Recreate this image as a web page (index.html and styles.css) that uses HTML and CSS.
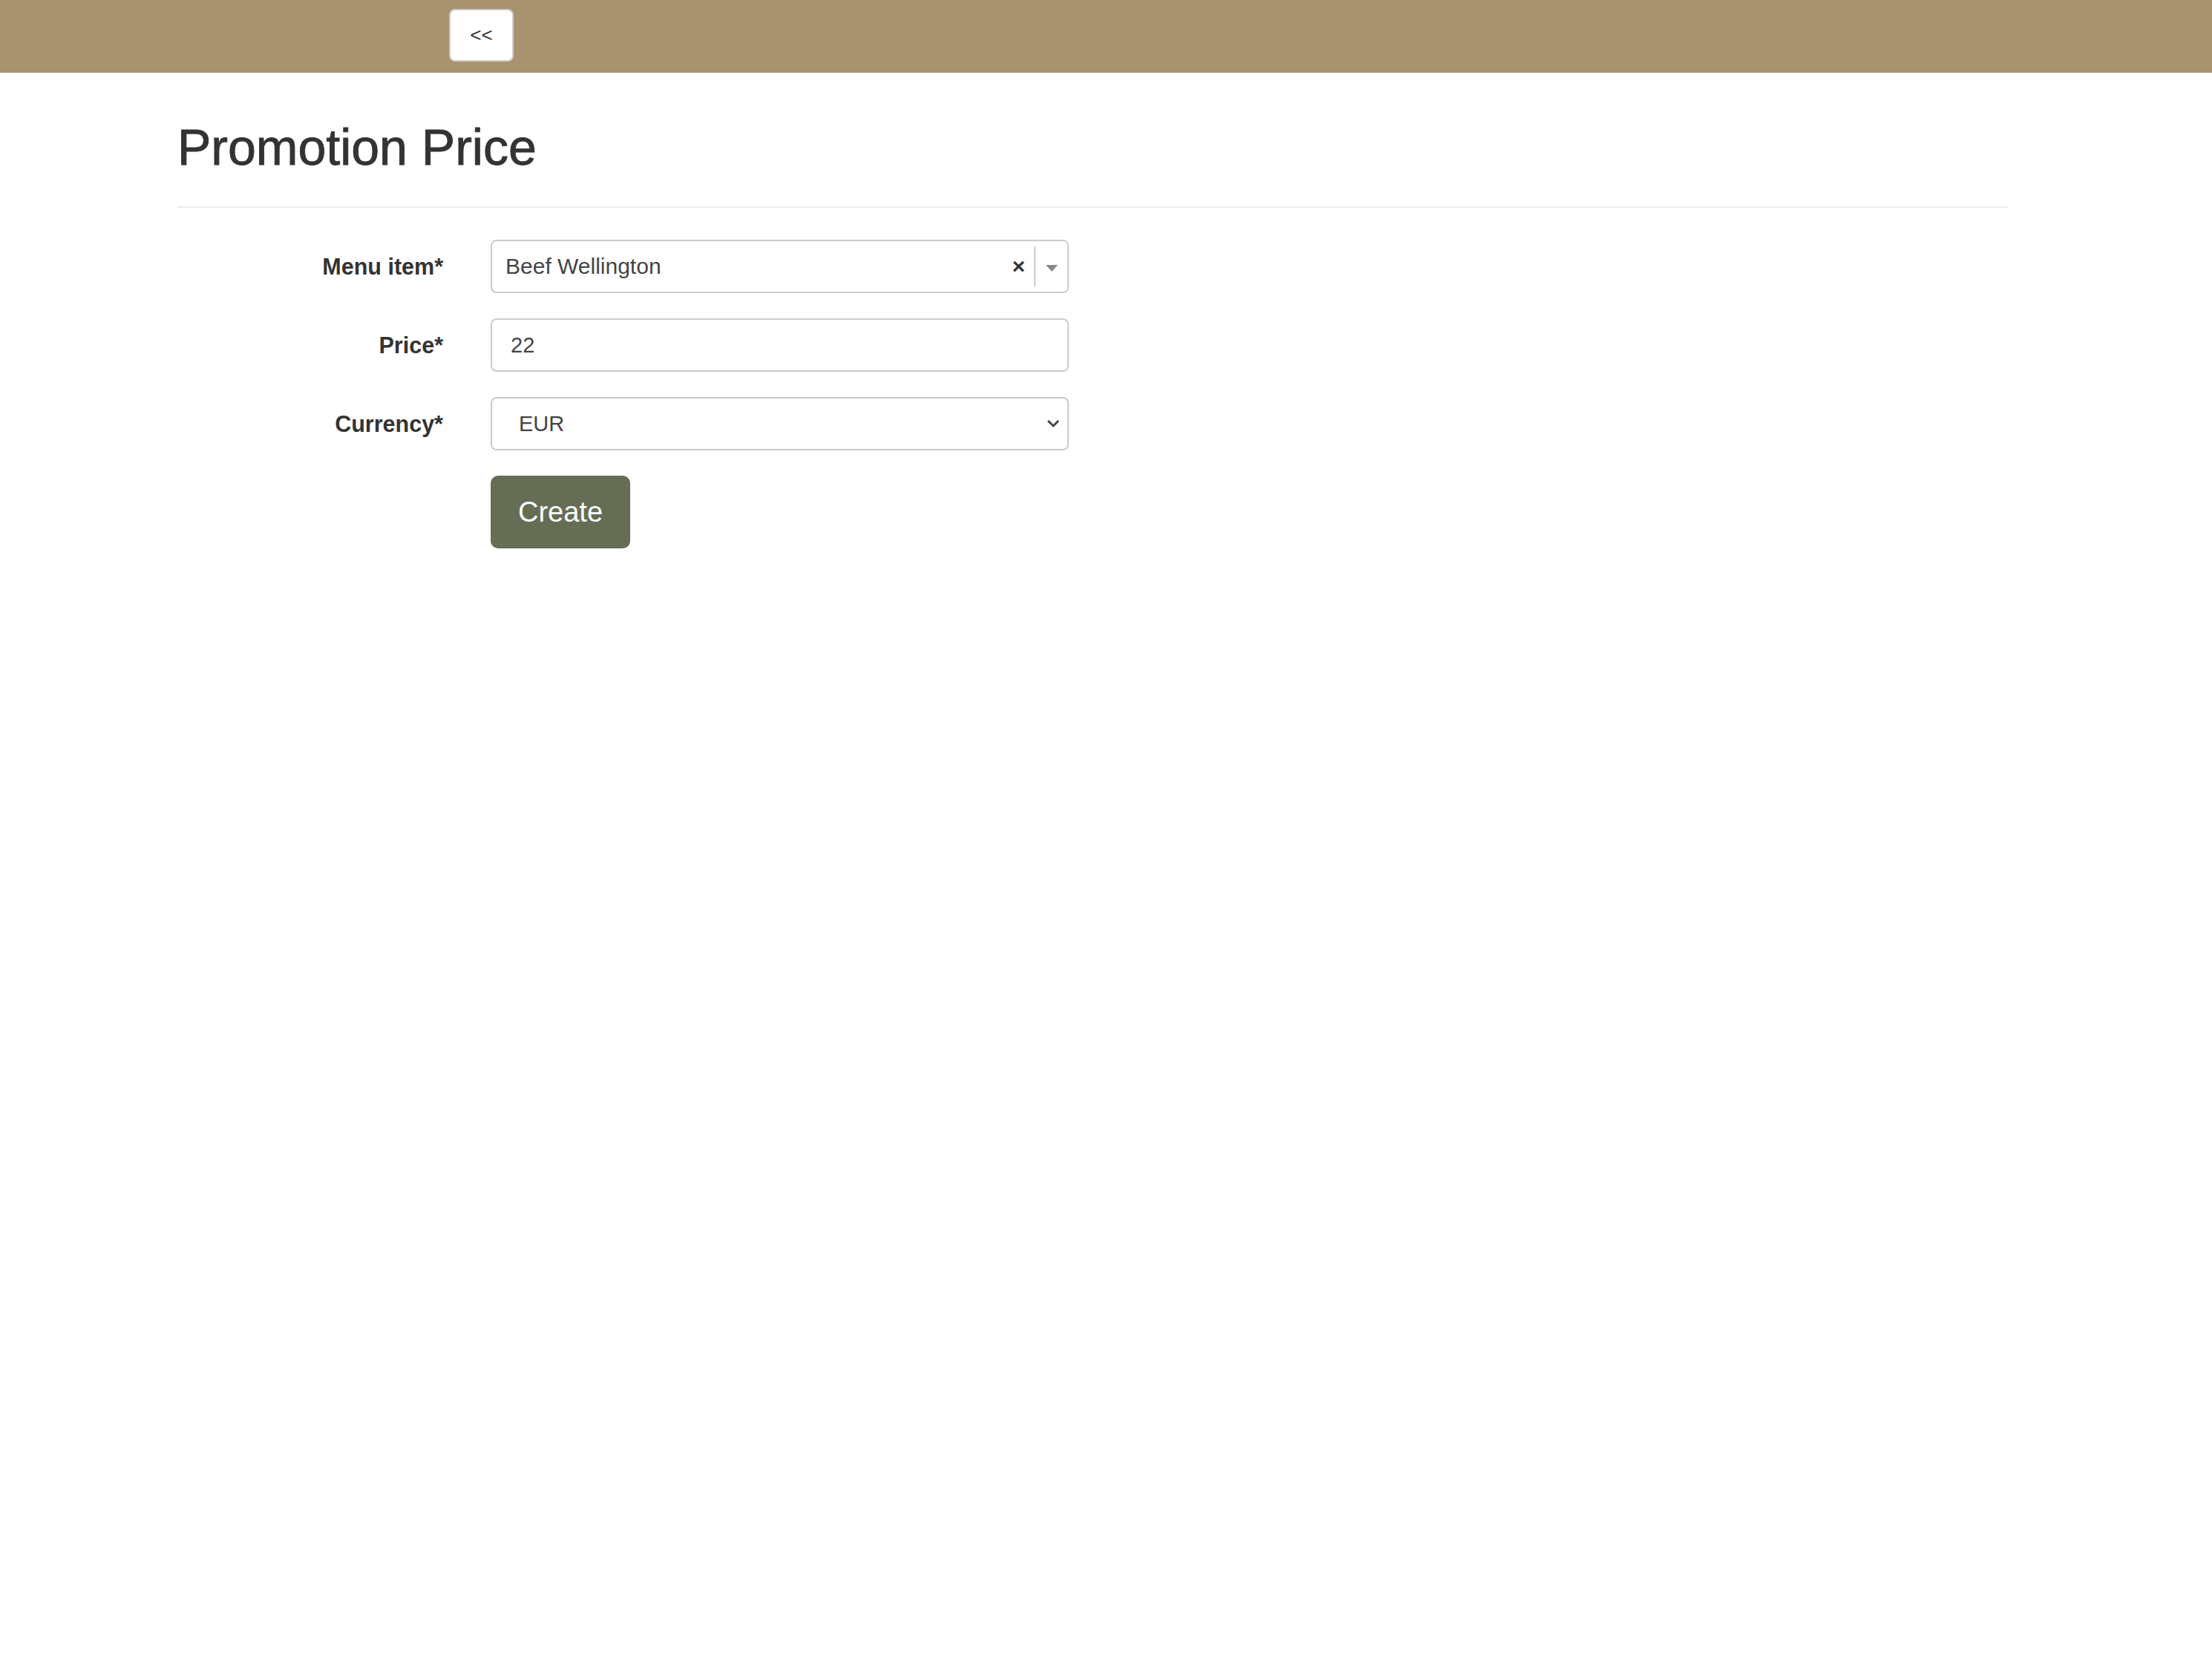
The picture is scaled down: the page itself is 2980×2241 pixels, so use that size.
FILE: index.html
```html
<!DOCTYPE html>
<html lang="en">
<head>
<meta charset="utf-8">
<title>Promotion Price</title>
<link rel="stylesheet" href="styles.css">
</head>
<body>
<header class="topbar">
  <button class="back-btn" type="button">&lt;&lt;</button>
</header>
<main class="container">
  <h1 class="page-title">Promotion Price</h1>
  <hr class="divider">
  <form class="form-grid">
    <label class="form-label">Menu item*</label>
    <div class="select2">
      <span class="select2-text">Beef Wellington</span>
      <span class="select2-clear">×</span>
      <span class="select2-sep"></span>
      <span class="select2-arrow"></span>
    </div>

    <label class="form-label">Price*</label>
    <input class="form-input" type="text" value="22">

    <label class="form-label">Currency*</label>
    <div class="select-wrap">
      <select class="form-select">
        <option>EUR</option>
      </select>
      <svg class="chevron" width="18" height="12" viewBox="0 0 18 12"><polyline points="2,2 9,9 16,2" fill="none" stroke="#444" stroke-width="3"/></svg>
    </div>

    <span></span>
    <div><button class="create-btn" type="button">Create</button></div>
  </form>
</main>
</body>
</html>
```
FILE: styles.css
```css
html, body {
  margin: 0;
  padding: 0;
  background: #fff;
  font-family: "Liberation Sans", Arial, Helvetica, sans-serif;
  color: #333;
}

.topbar {
  height: 98px;
  background: #a8926f;
  padding-left: 605px;
  padding-top: 12px;
  box-sizing: border-box;
}

.back-btn {
  display: block;
  width: 87px;
  height: 71px;
  background: #fff;
  border: 2px solid #ccc;
  border-radius: 8px;
  font-family: "Liberation Sans", Arial, sans-serif;
  font-size: 26px;
  color: #333;
  padding: 0;
}

.container {
  padding: 0 274px 0 239px;
}

.page-title {
  margin: 63px 0 0;
  font-size: 68px;
  line-height: 75px;
  font-weight: normal;
  color: #333;
  -webkit-text-stroke: 0.9px #333;
}

.divider {
  margin: 42px 0 0;
  border: 0;
  border-top: 2px solid #eee;
  height: 0;
}

.form-grid {
  margin-top: 43px;
  display: grid;
  grid-template-columns: 358px 779px;
  column-gap: 64px;
  row-gap: 34px;
  align-items: center;
}

.form-label {
  text-align: right;
  font-weight: bold;
  font-size: 30.5px;
  color: #333;
}

.select2 {
  position: relative;
  height: 72px;
  box-sizing: border-box;
  border: 2px solid #ccc;
  border-radius: 8px;
  display: flex;
  align-items: center;
  padding-left: 18px;
}

.select2-text {
  flex: 1;
  font-size: 30px;
  color: #444;
}

.select2-clear {
  font-size: 30px;
  font-weight: bold;
  color: #333;
  margin-right: 12px;
}

.select2-sep {
  width: 2px;
  height: 54px;
  background: #ccc;
}

.select2-arrow {
  width: 0;
  height: 0;
  border-left: 8px solid transparent;
  border-right: 8px solid transparent;
  border-top: 9px solid #888;
  margin: 4px 13px 0 14px;
}

.form-input {
  height: 72px;
  box-sizing: border-box;
  border: 2px solid #ccc;
  border-radius: 8px;
  padding: 0 25px;
  font-family: "Liberation Sans", Arial, sans-serif;
  font-size: 29px;
  color: #444;
  width: 100%;
}

.select-wrap {
  position: relative;
}

.form-select {
  -webkit-appearance: none;
  appearance: none;
  height: 72px;
  width: 100%;
  box-sizing: border-box;
  border: 2px solid #ccc;
  border-radius: 8px;
  background: #fff;
  padding: 0 36px;
  font-family: "Liberation Sans", Arial, sans-serif;
  font-size: 29px;
  color: #444;
}

.chevron {
  position: absolute;
  right: 12px;
  top: 30px;
  pointer-events: none;
}

.create-btn {
  height: 98px;
  padding: 0 37px;
  background: #656e55;
  color: #fff;
  border: 0;
  border-radius: 10px;
  font-family: "Liberation Sans", Arial, sans-serif;
  font-size: 38px;
}
```
